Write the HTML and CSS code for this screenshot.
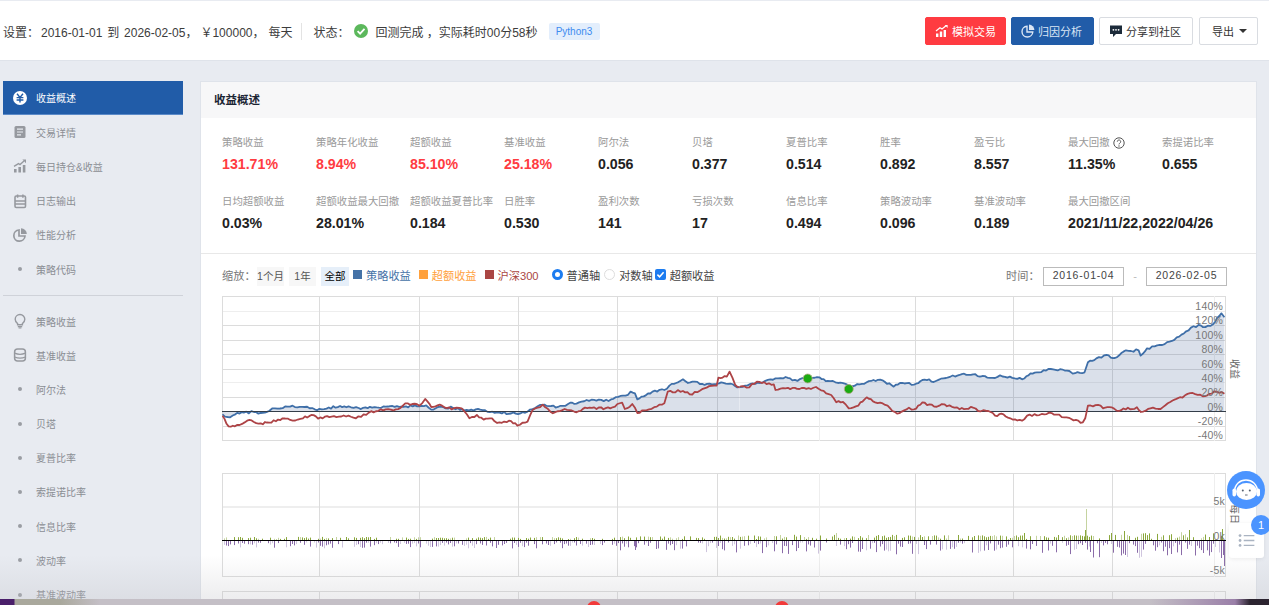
FILE: index.html
```html
<!DOCTYPE html>
<html lang="zh-CN">

<head>
    <meta charset="UTF-8">
    <meta name="viewport" content="width=device-width, initial-scale=1.0">
    <title>回测结果</title>
    <link rel="stylesheet" href="styles.css">
</head>

<body>
    <header class="topBar">
        <div class="summary">
            <span class="setLabel">设置：</span>
            <span class="setRange">2016-01-01 到 2026-02-05，</span>
            <span class="setMoney">￥100000，</span>
            <span class="setFreq">每天</span>
            <span class="divider"></span>
            <span class="stateLabel">状态：</span>
            <svg class="checkIcon" viewBox="0 0 14 14">
                <circle cx="7" cy="7" r="7" fill="#5cb85c" />
                <path d="M3.6 7.2 6.1 9.7 10.5 4.9" fill="none" stroke="#fff" stroke-width="1.8" />
            </svg>
            <span class="stateText">回测完成 ，实际耗时00分58秒</span>
            <span class="langTag">Python3</span>
        </div>
        <div class="actions">
            <button class="btn btnRed">
                <svg class="btnIcon" viewBox="0 0 14 14" fill="#fff">
                    <rect x="1" y="9.5" width="2.4" height="3.5" />
                    <rect x="4.8" y="7.5" width="2.4" height="5.5" />
                    <rect x="8.6" y="6" width="2.4" height="7" />
                    <path d="M1 7 5 3.8 7 5 11 1.8" fill="none" stroke="#fff" stroke-width="1.2" />
                    <path d="M9.6 1h3v3z" />
                </svg>模拟交易
            </button>
            <button class="btn btnBlue">
                <svg class="btnIcon" viewBox="0 0 14 14">
                    <path d="M6 2.2a5.4 5.4 0 1 0 5.8 5.8H6z" fill="none" stroke="#dbe6f5" stroke-width="1.4" />
                    <path d="M8 0.6a5.4 5.4 0 0 1 5.4 5.4H8z" fill="#dbe6f5" />
                </svg>归因分析
            </button>
            <button class="btn btnShare">
                <svg class="btnIcon" viewBox="0 0 14 14">
                    <path d="M1 1.5h12v8.5H7l-3 3V10H1z" fill="#1c2b3a" />
                    <circle cx="4.4" cy="5.8" r=".9" fill="#fff" />
                    <circle cx="7" cy="5.8" r=".9" fill="#fff" />
                    <circle cx="9.6" cy="5.8" r=".9" fill="#fff" />
                </svg>分享到社区
            </button>
            <button class="btn btnExport">导出<span class="caret"></span></button>
        </div>
    </header>

    <div class="page">
        <nav class="sideNav">
            <a class="navItem active">
                <svg class="navIcon" viewBox="0 0 16 16">
                    <circle cx="8" cy="8" r="7" fill="#fff" />
                    <path d="M5 3.8 8 7.4l3-3.6M4.6 7.6h6.8M4.6 10h6.8M8 7.4v5.2" fill="none" stroke="#215ca8" stroke-width="1.4" />
                </svg>收益概述
            </a>
            <a class="navItem">
                <svg class="navIcon" viewBox="0 0 16 16">
                    <rect x="2.5" y="2" width="11" height="12" rx="1.5" fill="#96999f" />
                    <path d="M5 5.2h6M5 8h6M5 10.8h4" stroke="#e8ebf1" stroke-width="1.2" />
                </svg>交易详情
            </a>
            <a class="navItem">
                <svg class="navIcon" viewBox="0 0 16 16" fill="#96999f">
                    <rect x="2" y="11" width="2.6" height="3.5" />
                    <rect x="6.4" y="9" width="2.6" height="5.5" />
                    <rect x="10.8" y="7" width="2.6" height="7.5" />
                    <path d="M2 8.4 6.5 5.6 8 6.6 12 3" fill="none" stroke="#96999f" stroke-width="1.3" />
                    <path d="M10.4 1.6h3.6v3.6z" />
                </svg>每日持仓&amp;收益
            </a>
            <a class="navItem">
                <svg class="navIcon" viewBox="0 0 16 16">
                    <rect x="3" y="3" width="10.5" height="11.5" rx="1.2" fill="none" stroke="#96999f" stroke-width="1.6" />
                    <path d="M5.6 1.4v3.4M10.9 1.4v3.4M3 8h10.5M3 11h10.5" stroke="#96999f" stroke-width="1.5" />
                </svg>日志输出
            </a>
            <a class="navItem">
                <svg class="navIcon" viewBox="0 0 16 16">
                    <path d="M7 3a5.6 5.6 0 1 0 6 6H7z" fill="none" stroke="#96999f" stroke-width="1.7" />
                    <path d="M9 1.2A5.8 5.8 0 0 1 14.8 7H9z" fill="#96999f" />
                </svg>性能分析
            </a>
            <a class="navItem"><span class="navDot"></span>策略代码</a>

            <div class="navLine"></div>

            <a class="navItem">
                <svg class="navIcon" viewBox="0 0 16 16">
                    <path d="M5.6 10.6C4 9.5 3.2 8 3.2 6.3a4.8 4.8 0 0 1 9.6 0c0 1.7-.8 3.2-2.4 4.3v1.2H5.6z" fill="none" stroke="#96999f" stroke-width="1.4" />
                    <path d="M5.8 13.6h4.4M6.6 15h2.8" stroke="#96999f" stroke-width="1.2" />
                </svg>策略收益
            </a>
            <a class="navItem">
                <svg class="navIcon" viewBox="0 0 16 16">
                    <rect x="2.6" y="2" width="10.8" height="12" rx="3" fill="none" stroke="#96999f" stroke-width="1.5" />
                    <path d="M2.6 6.2c3 1.3 7.8 1.3 10.8 0M2.6 10c3 1.3 7.8 1.3 10.8 0" fill="none" stroke="#96999f" stroke-width="1.3" />
                </svg>基准收益
            </a>
            <a class="navItem"><span class="navDot"></span>阿尔法</a>
            <a class="navItem"><span class="navDot"></span>贝塔</a>
            <a class="navItem"><span class="navDot"></span>夏普比率</a>
            <a class="navItem"><span class="navDot"></span>索提诺比率</a>
            <a class="navItem"><span class="navDot"></span>信息比率</a>
            <a class="navItem"><span class="navDot"></span>波动率</a>
            <a class="navItem"><span class="navDot"></span>基准波动率</a>
        </nav>

        <main class="panel">
            <h2 class="panelTitle">收益概述</h2>

            <section class="stats">
                <div class="stat"><p class="statName">策略收益</p><p class="statValue red">131.71%</p></div>
                <div class="stat"><p class="statName">策略年化收益</p><p class="statValue red">8.94%</p></div>
                <div class="stat"><p class="statName">超额收益</p><p class="statValue red">85.10%</p></div>
                <div class="stat"><p class="statName">基准收益</p><p class="statValue red">25.18%</p></div>
                <div class="stat"><p class="statName">阿尔法</p><p class="statValue">0.056</p></div>
                <div class="stat"><p class="statName">贝塔</p><p class="statValue">0.377</p></div>
                <div class="stat"><p class="statName">夏普比率</p><p class="statValue">0.514</p></div>
                <div class="stat"><p class="statName">胜率</p><p class="statValue">0.892</p></div>
                <div class="stat"><p class="statName">盈亏比</p><p class="statValue">8.557</p></div>
                <div class="stat">
                    <p class="statName">最大回撤
                        <svg class="helpIcon" viewBox="0 0 12 12">
                            <circle cx="6" cy="6" r="5.2" fill="none" stroke="#555" stroke-width="1" />
                            <path d="M4.3 4.7a1.7 1.7 0 1 1 2.6 1.4c-.6.4-.9.7-.9 1.3" fill="none" stroke="#555" stroke-width="1" />
                            <circle cx="6" cy="9" r=".7" fill="#555" />
                        </svg>
                    </p>
                    <p class="statValue">11.35%</p>
                </div>
                <div class="stat"><p class="statName">索提诺比率</p><p class="statValue">0.655</p></div>

                <div class="stat"><p class="statName">日均超额收益</p><p class="statValue">0.03%</p></div>
                <div class="stat"><p class="statName">超额收益最大回撤</p><p class="statValue">28.01%</p></div>
                <div class="stat"><p class="statName">超额收益夏普比率</p><p class="statValue">0.184</p></div>
                <div class="stat"><p class="statName">日胜率</p><p class="statValue">0.530</p></div>
                <div class="stat"><p class="statName">盈利次数</p><p class="statValue">141</p></div>
                <div class="stat"><p class="statName">亏损次数</p><p class="statValue">17</p></div>
                <div class="stat"><p class="statName">信息比率</p><p class="statValue">0.494</p></div>
                <div class="stat"><p class="statName">策略波动率</p><p class="statValue">0.096</p></div>
                <div class="stat"><p class="statName">基准波动率</p><p class="statValue">0.189</p></div>
                <div class="stat statWide"><p class="statName">最大回撤区间</p><p class="statValue">2021/11/22,2022/04/26</p></div>
            </section>

            <section class="chartArea">
                <div class="toolbar">
                    <span class="toolLabel">缩放：</span>
                    <button class="rangeBtn">1个月</button>
                    <button class="rangeBtn">1年</button>
                    <button class="rangeBtn current">全部</button>
                    <span class="legend legendBlue"><i></i>策略收益</span>
                    <span class="legend legendOrange"><i></i>超额收益</span>
                    <span class="legend legendRed"><i></i>沪深300</span>
                    <span class="option"><i class="radio on"></i>普通轴</span>
                    <span class="option optLog"><i class="radio"></i>对数轴</span>
                    <span class="option">
                        <svg class="checkBox" viewBox="0 0 11 11">
                            <rect width="11" height="11" rx="2" fill="#1c7cf0" />
                            <path d="M2.4 5.6 4.6 7.8 8.6 3.2" fill="none" stroke="#fff" stroke-width="1.5" />
                        </svg>超额收益
                    </span>
                    <span class="timeBox">
                        <span class="toolLabel">时间：</span>
                        <span class="dateInput">2016-01-04</span>
                        <span class="dash">-</span>
                        <span class="dateInput">2026-02-05</span>
                    </span>
                </div>

                <svg class="chartMain" viewBox="222 296 1005 146">
                    <path class="gridFaint" d="M222 311.5H1226M222 382.5H1226" />
                    <path class="grid" d="M222 325.5H1226M222 340.5H1226M222 354.5H1226M222 369.5H1226M222 397.5H1226M222 426.5H1226M222 440.5H1226M222 296.5H1226M222.5 296V441M1225.5 296V441" />
                    <path class="grid" d="M319.5 296V441M419.5 296V441M518.5 296V441M617.5 296V441M717.5 296V441M915.5 296V441M1013.5 296V441M1112.5 296V441" />
                    <path class="gridFaint" d="M819.5 296V441M1214.5 296V441" />

                    <g transform="translate(210 255) scale(.3378 .3333)">
                        <polygon class="area" points="37,478 52,486 75,478 100,473 130,471 150,474 175,468 185,460 230,455 280,456 310,463 345,461 385,453 410,454 440,459 500,458 540,453 600,454 640,451 655,464 675,456 720,459 760,465 800,464 850,472 905,476 940,470 970,454 990,449 1030,456 1060,447 1085,446 1115,435 1180,438 1215,423 1230,422 1245,410 1258,415 1265,433 1290,421 1310,410 1345,405 1360,392 1380,384 1400,373 1415,384 1435,380 1450,387 1500,387 1520,384 1568,396 1568,469 37,469" />
                        <polyline class="lineBlue" points="37,478 52,486 75,478 100,473 130,471 150,474 175,468 185,460 230,455 280,456 310,463 345,461 385,453 410,454 440,459 500,458 540,453 600,454 640,451 655,464 675,456 720,459 760,465 800,464 850,472 905,476 940,470 970,454 990,449 1030,456 1060,447 1085,446 1115,435 1180,438 1215,423 1230,422 1245,410 1258,415 1265,433 1290,421 1310,410 1345,405 1360,392 1380,384 1400,373 1415,384 1435,380 1450,387 1500,387 1520,384 1568,396" />
                    </g>
                    <g transform="translate(740 255) scale(.3378 .3333)">
                        <polygon class="area" points="0,396 30,387 60,384 90,373 135,366 155,376 200,371 235,367 260,378 290,384 320,390 340,392 375,382 415,374 455,395 480,384 515,389 540,375 580,378 610,369 650,360 690,358 710,365 755,369 770,361 835,373 860,355 885,352 920,342 975,348 985,356 1020,352 1030,322 1055,310 1085,300 1110,309 1135,290 1180,286 1186,302 1205,280 1250,270 1300,245 1335,218 1365,212 1370,216 1400,208 1425,175 1434,187 1434,469 0,469" />
                        <polyline class="lineBlue" points="0,396 30,387 60,384 90,373 135,366 155,376 200,371 235,367 260,378 290,384 320,390 340,392 375,382 415,374 455,395 480,384 515,389 540,375 580,378 610,369 650,360 690,358 710,365 755,369 770,361 835,373 860,355 885,352 920,342 975,348 985,356 1020,352 1030,322 1055,310 1085,300 1110,309 1135,290 1180,286 1186,302 1205,280 1250,270 1300,245 1335,218 1365,212 1370,216 1400,208 1425,175 1434,187" />
                    </g>

                    <path class="zeroLine" d="M222 411.5H1226" />

                    <g transform="translate(210 255) scale(.3378 .3333)">
                        <polyline class="lineRed" points="37,482 55,514 80,510 110,497 150,505 175,503 215,490 245,497 275,490 300,480 320,491 360,485 410,482 432,490 470,473 520,463 550,463 585,445 620,452 637,432 655,456 680,449 715,463 745,460 768,490 790,480 810,494 835,490 850,504 885,497 910,512 940,500 955,465 985,449 1015,475 1050,462 1085,472 1110,458 1185,460 1220,443 1228,462 1250,447 1265,474 1300,463 1345,445 1355,410 1400,408 1420,418 1450,407 1470,398 1500,392 1505,368 1530,365 1538,350 1555,390 1568,397" />
                    </g>
                    <g transform="translate(740 255) scale(.3378 .3333)">
                        <polyline class="lineRed" points="0,395 20,398 50,380 100,388 105,405 135,400 210,402 225,396 270,420 285,442 305,441 322,460 350,452 375,427 400,442 430,450 465,476 500,458 515,463 540,442 575,455 605,448 650,463 690,458 705,468 735,468 755,482 780,478 800,490 835,497 850,482 915,473 960,487 1015,502 1022,490 1030,452 1060,450 1075,460 1100,457 1115,467 1175,457 1187,471 1215,460 1245,462 1295,430 1340,414 1370,424 1410,410 1434,416" />
                    </g>

                    <circle class="marker" cx="807.7" cy="378.5" r="4.5" />
                    <circle class="marker" cx="848.8" cy="389" r="4.5" />

                    <g class="axisText">
                        <text x="1223" y="310">140%</text>
                        <text x="1223" y="324">120%</text>
                        <text x="1223" y="339">100%</text>
                        <text x="1223" y="353">80%</text>
                        <text x="1223" y="368">60%</text>
                        <text x="1223" y="382">40%</text>
                        <text x="1223" y="396">20%</text>
                        <text x="1223" y="411">0%</text>
                        <text x="1223" y="425">-20%</text>
                        <text x="1223" y="439">-40%</text>
                    </g>
                </svg>
                <span class="axisTitle axisTitleTop">收益</span>

                <svg class="chartBars" viewBox="222 473 1005 104">
                    <path class="gridFaint gridThick" d="M222 507H1226" />
                    <path class="grid" d="M222 473.5H1226M222 576.5H1226M222.5 473V577M1225.5 473V577" />
                    <path class="grid" d="M319.5 473V577M419.5 473V577M518.5 473V577M617.5 473V577M717.5 473V577M915.5 473V577M1013.5 473V577M1112.5 473V577" />
                    <path class="gridFaint" d="M819.5 473V577M1214.5 473V577" />
                    <path id="barsUp" class="barUp" />
                    <path id="barsUpLight" class="barUpLight" />
                    <path id="barsDown" class="barDown" />
                    <path id="barsDownLight" class="barDownLight" />
                    <path class="barZero" d="M222 540.5H1226" />
                    <g class="axisText">
                        <text x="1225" y="505">5k</text>
                        <text x="1225" y="540">0k</text>
                        <text x="1225" y="574">-5k</text>
                    </g>
                </svg>
                <span class="axisTitle axisTitleBars">每日盈亏</span>

                <svg class="chartNext" viewBox="222 591 1005 14">
                    <path class="grid" d="M222 591.5H1226M222.5 591V605M1225.5 591V605" />
                    <path class="grid" d="M319.5 591V605M419.5 591V605M518.5 591V605M617.5 591V605M717.5 591V605M915.5 591V605M1013.5 591V605M1112.5 591V605" />
                    <path class="gridFaint" d="M819.5 591V605M1214.5 591V605" />
                </svg>
            </section>
        </main>
    </div>

    <!-- floating helpers -->
    <div class="chatBtn">
        <svg viewBox="0 0 38 38">
            <circle cx="19" cy="19" r="19" fill="#4b94ff" />
            <ellipse cx="19.5" cy="20.5" rx="10.5" ry="8.5" fill="#fff" />
            <path d="M7.5 21c0-16 23-16 23 0" fill="none" stroke="#fff" stroke-width="1.5" />
            <rect x="5.5" y="17.5" width="3.5" height="8" rx="1.7" fill="#fff" />
            <rect x="29.5" y="17.5" width="3.5" height="8" rx="1.7" fill="#fff" />
            <circle cx="15.8" cy="19.5" r="1" fill="#55606e" />
            <circle cx="22.8" cy="19.5" r="1" fill="#55606e" />
            <path d="M18 24h2.6" stroke="#55606e" stroke-width=".9" />
        </svg>
    </div>
    <div class="listCard">
        <svg viewBox="0 0 22 18">
            <circle cx="2.5" cy="3" r="1.7" fill="#aab4c2" />
            <circle cx="2.5" cy="9" r="1.7" fill="#aab4c2" />
            <circle cx="2.5" cy="15" r="1.7" fill="#aab4c2" />
            <path d="M7 3h13M7 9h13M7 15h13" stroke="#aab4c2" stroke-width="1.6" />
        </svg>
    </div>
    <span class="listBadge">1</span>

    <div class="fadeBottom"></div>
    <div class="dock">
        <span class="dockDot dotA"></span>
        <span class="dockDot dotB"></span>
    </div>

    <script src="script.js"></script>
</body>

</html>
```

FILE: styles.css
```css
* {
    box-sizing: border-box;
    padding: 0;
    margin: 0;
}

html,
body {
    height: 605px;
    overflow: hidden;
}

body {
    background-color: #e8ebf1;
    font-family: "Liberation Sans", "Noto Sans CJK SC", sans-serif;
    font-size: 11px;
    color: #333;
}

/* top bar */
.topBar {
    height: 61px;
    background-color: #fff;
    border-top: 1px solid #e8ebf1;
    border-bottom: 1px solid #dfe3ea;
    display: flex;
    justify-content: space-between;
    align-items: center;
    padding: 1px 11px 0 3px;
}

.summary {
    display: flex;
    align-items: center;
    font-size: 12px;
    color: #3c3c3c;
    white-space: nowrap;
}

.setLabel {
    width: 38px;
}

.setRange {
    word-spacing: 1.5px;
}

.setMoney {
    margin-left: 3px;
}

.setFreq {
    margin-left: 4px;
}

.divider {
    width: 1px;
    height: 17px;
    background-color: #e3e3e3;
    margin: 0 12px 0 8px;
}

.stateLabel {
    width: 40px;
}

.checkIcon {
    width: 14px;
    height: 14px;
    margin-right: 8px;
}

.langTag {
    margin-left: 11px;
    width: 51px;
    height: 17px;
    line-height: 17px;
    text-align: center;
    font-size: 10px;
    color: #3d8cf0;
    background-color: #e3eefc;
    border-radius: 2px;
}

.actions {
    display: flex;
    align-items: center;
    gap: 5px;
}

.btn {
    height: 28px;
    padding: 0 9px;
    display: flex;
    align-items: center;
    font-family: inherit;
    font-size: 11px;
    color: #333;
    background-color: #fff;
    border: 1px solid #d9dce1;
    border-radius: 2px;
}

.btnRed {
    width: 81px;
    color: #fff;
    background-color: #ff3b41;
    border-color: #ff3b41;
}

.btnBlue {
    width: 83px;
    color: #dbe6f5;
    background-color: #215ca8;
    border-color: #215ca8;
}

.btnShare {
    width: 94px;
}

.btnExport {
    width: 59px;
    margin-left: 1px;
    padding-left: 12px;
}

.btnIcon {
    width: 14px;
    height: 14px;
    margin-right: 3px;
    flex-shrink: 0;
}

.caret {
    margin-left: 5px;
    border-left: 4px solid transparent;
    border-right: 4px solid transparent;
    border-top: 4px solid #333;
}

/* side nav + panel */
.page {
    display: flex;
    align-items: flex-start;
    padding: 20px 12px 0 3px;
    gap: 17px;
}

.sideNav {
    width: 180px;
    height: 524px;
    overflow: hidden;
    flex-shrink: 0;
}

.navItem {
    height: 34.2px;
    display: flex;
    align-items: center;
    padding-left: 9px;
    font-size: 10px;
    color: #8b8e94;
}

.navItem.active {
    color: #fff;
    background-color: #215ca8;
    border-bottom: 1px solid #5b8ac8;
}

.navIcon {
    width: 16px;
    height: 16px;
    margin-right: 8px;
    flex-shrink: 0;
}

.navDot {
    width: 4px;
    height: 4px;
    border-radius: 50%;
    background-color: #9a9da3;
    margin: 0 14px 0 6px;
}

.navLine {
    height: 1px;
    background-color: #cfd2d9;
    margin: 8.8px 0 8px;
}

.panel {
    width: 1057px;
    height: 524px;
    background-color: #fff;
    border: 1px solid #dfe3ea;
    overflow: hidden;
}

.panelTitle {
    height: 36px;
    line-height: 37px;
    padding-left: 13px;
    font-size: 11.5px;
    font-weight: 700;
    color: #1a2433;
    background-color: #f7f7f8;
}

.stats {
    display: grid;
    grid-template-columns: repeat(11, 94px);
    grid-auto-rows: 58.5px;
    padding: 18px 0 0 21px;
    height: 136px;
    border-bottom: 1px solid #e8e8e8;
}

.statName {
    height: 13px;
    line-height: 13px;
    font-size: 10.4px;
    color: #9a9a9a;
    white-space: nowrap;
    display: flex;
    align-items: center;
}

.statValue {
    margin-top: 7px;
    line-height: 16px;
    font-size: 14.2px;
    font-weight: 700;
    color: #222;
    white-space: nowrap;
}

.red {
    color: #ff3b41;
}

.helpIcon {
    width: 12px;
    height: 12px;
    margin-left: 3px;
}

.statWide {
    grid-column: span 2;
}

/* chart area */
.chartArea {
    padding: 12px 0 0 21px;
    position: relative;
}

.toolbar {
    width: 1005px;
    height: 20px;
    display: flex;
    align-items: center;
    font-size: 11.2px;
    white-space: nowrap;
}

.toolLabel {
    color: #777;
    width: 35px;
    padding-bottom: 3px;
}

.rangeBtn {
    width: 27px;
    height: 19px;
    margin-right: 5px;
    padding-bottom: 2px;
    font-family: inherit;
    font-size: 10.5px;
    color: #555;
    background-color: #f7f7f7;
    border: 0;
}

.rangeBtn.current {
    width: 28px;
    margin-right: 4px;
    color: #000;
    background-color: #e6eff9;
}

.legend {
    display: flex;
    align-items: center;
    margin-right: 8px;
    padding-bottom: 3px;
}

.legend i {
    width: 9px;
    height: 9px;
    margin-right: 4px;
}

.legendBlue {
    color: #4572a7;
}

.legendBlue i {
    background-color: #4572a7;
}

.legendOrange {
    color: #ffa13d;
}

.legendOrange i {
    background-color: #ffa13d;
}

.legendRed {
    color: #aa4643;
    margin-right: 13px;
}

.legendRed i {
    background-color: #aa4643;
}

.option {
    display: flex;
    align-items: center;
    margin-right: 4px;
    padding-bottom: 3px;
    color: #444;
}

.optLog {
    margin-right: 2px;
}

.radio {
    width: 11px;
    height: 11px;
    border-radius: 50%;
    border: 1px solid #ddd;
    margin-right: 4px;
}

.radio.on {
    border: 3px solid #1c7cf0;
}

.checkBox {
    width: 11px;
    height: 11px;
    margin-right: 4px;
}

.timeBox {
    display: flex;
    align-items: center;
    margin-left: auto;
    color: #666;
}

.timeBox .toolLabel {
    width: 37px;
}

.dateInput {
    width: 81px;
    height: 19px;
    line-height: 15px;
    text-align: center;
    font-size: 10.5px;
    letter-spacing: .8px;
    color: #444;
    border: 1px solid #bbb;
}

.dash {
    width: 22px;
    text-align: center;
    color: #bbb;
}

.chartMain,
.chartBars,
.chartNext {
    display: block;
    width: 1005px;
}

.chartMain {
    height: 146px;
    margin-top: 10px;
}

.chartBars {
    height: 104px;
    margin-top: 31px;
}

.chartNext {
    height: 14px;
    margin-top: 14px;
}

.grid,
.gridFaint {
    fill: none;
    stroke: #dcdcdc;
    stroke-width: 1;
}

.gridFaint {
    stroke: #eeeeee;
}

.gridThick {
    stroke-width: 2;
}

.area {
    fill: rgba(69, 100, 150, .2);
}

.lineBlue,
.lineRed {
    fill: none;
    stroke-width: 1.8;
    stroke-linejoin: round;
    vector-effect: non-scaling-stroke;
}

.lineBlue {
    stroke: #3f6fa8;
}

.lineRed {
    stroke: #ad4346;
}

.zeroLine {
    stroke: #333d49;
    stroke-width: 1;
}

.marker {
    fill: #1bab12;
    stroke: #b9a98d;
    stroke-width: .8;
}

.axisText text {
    text-anchor: end;
    font-size: 10.5px;
    fill: #777;
    letter-spacing: .2px;
}

.axisTitle {
    position: absolute;
    writing-mode: vertical-rl;
    text-orientation: sideways;
    font-size: 10px;
    color: #666;
}

.axisTitleTop {
    left: 1027px;
    top: 105px;
}

.axisTitleBars {
    left: 1027px;
    top: 250px;
}

.barUp,
.barUpLight,
.barDown,
.barDownLight {
    fill: none;
    stroke-width: 1;
}

.barUp {
    stroke: #8aa73c;
}

.barUpLight {
    stroke: #c5d3a0;
}

.barDown {
    stroke: #8a6ba8;
}

.barDownLight {
    stroke: #cfc5de;
}

.barZero {
    stroke: #000;
    stroke-width: 1;
}

/* floating helpers */
.chatBtn {
    position: absolute;
    left: 1227px;
    top: 471px;
    width: 38px;
    height: 38px;
}

.listCard {
    position: absolute;
    left: 1229px;
    top: 523px;
    width: 35px;
    height: 35px;
    display: flex;
    align-items: center;
    justify-content: center;
    background-color: #fff;
    border-radius: 3px;
    box-shadow: 0 1px 4px rgba(0, 0, 0, .08);
}

.listCard svg {
    width: 18px;
    height: 15px;
}

.listBadge {
    position: absolute;
    left: 1251px;
    top: 515px;
    width: 20px;
    height: 20px;
    line-height: 20px;
    text-align: center;
    font-size: 11px;
    color: #fff;
    background-color: #4b94ff;
    border-radius: 50%;
}

/* desktop bleeding in at the bottom of the capture */
.fadeBottom {
    position: absolute;
    left: 0;
    right: 0;
    top: 555px;
    height: 44px;
    background: linear-gradient(rgba(190, 190, 195, 0), rgba(190, 190, 195, .28));
    pointer-events: none;
}

.dock {
    position: absolute;
    left: 0;
    right: 0;
    top: 599px;
    height: 6px;
    overflow: hidden;
    background: linear-gradient(90deg, #4a1f6a 0, #4a1f6a 14px, #a9a89c 15px, #a9a89c 60px, #c4bfc6 100px, #c4bfc6 1150px, #9a7fa8 1235px, #2c2430 1250px);
}

.dockDot {
    position: absolute;
    top: 2px;
    width: 14px;
    height: 14px;
    background-color: #f23a3a;
    border-radius: 50%;
}

.dotA {
    left: 587px;
}

.dotB {
    left: 775px;
}
```

FILE: script.js
```js
// fake daily numbers for the charts, same numbers every load
let seed = 7;
let rnd = () => {
    seed = (seed * 16807) % 2147483647;
    return seed / 2147483647;
};

// lower chart bars
let sections = [
    { from: 224, to: 620, up: 3, down: 6 },
    { from: 620, to: 720, up: 4, down: 10 },
    { from: 720, to: 1085, up: 6, down: 12 },
    { from: 1085, to: 1224, up: 10, down: 16 }
];

let paths = { barsUp: "", barsUpLight: "", barsDown: "", barsDownLight: "" };

// big days that stand out in the picture
let peaks = [
    ["barsUpLight", 1086.5, 509],
    ["barsUp", 1085.5, 530],
    ["barsUp", 1124.5, 531],
    ["barsUp", 1189.5, 530],
    ["barsUp", 1222.5, 529],
    ["barsUpLight", 836.5, 533],
    ["barsUp", 1024.5, 533],
    ["barsDown", 1141.5, 556],
    ["barsDown", 1224.5, 566],
    ["barsDown", 1203.5, 553],
    ["barsDown", 1090.5, 552],
    ["barsDown", 635.5, 550],
    ["barsDown", 496.5, 548]
];

for (let s of sections) {
    for (let x = s.from; x < s.to; x += 2) {
        let cx = x + 0.5;
        if (rnd() < 0.65) {
            let name = rnd() < 0.75 ? "barsUp" : "barsUpLight";
            let h = rnd() * s.up * 0.7 + 1;
            paths[name] += `M${cx} 540V${(540 - h).toFixed(1)}`;
        }
        if (rnd() < 0.7) {
            let name = rnd() < 0.7 ? "barsDown" : "barsDownLight";
            let r = rnd();
            let h = r * Math.sqrt(r) * s.down + 1.5;
            paths[name] += `M${cx} 541V${(541 + h).toFixed(1)}`;
        }
    }
}

for (let peak of peaks) {
    let start = peak[2] < 540 ? 540 : 541;
    paths[peak[0]] += `M${peak[1]} ${start}V${peak[2]}`;
}

for (let id in paths) {
    document.getElementById(id).setAttribute("d", paths[id]);
}

// roughen the upper chart lines so they look like daily closes
document.querySelectorAll(".lineBlue, .lineRed").forEach((line) => {
    let pts = line.getAttribute("points").split(" ").map((p) => p.split(",").map(Number));
    let out = [];
    for (let i = 0; i < pts.length - 1; i++) {
        let [x1, y1] = pts[i];
        let [x2, y2] = pts[i + 1];
        let steps = Math.max(1, Math.round((x2 - x1) / 7));
        for (let j = 0; j < steps; j++) {
            let t = j / steps;
            let y = y1 + (y2 - y1) * t + (j === 0 ? 0 : (rnd() - 0.5) * 7);
            out.push(`${(x1 + (x2 - x1) * t).toFixed(1)},${y.toFixed(1)}`);
        }
    }
    out.push(pts[pts.length - 1].join(","));
    line.setAttribute("points", out.join(" "));
});
```
